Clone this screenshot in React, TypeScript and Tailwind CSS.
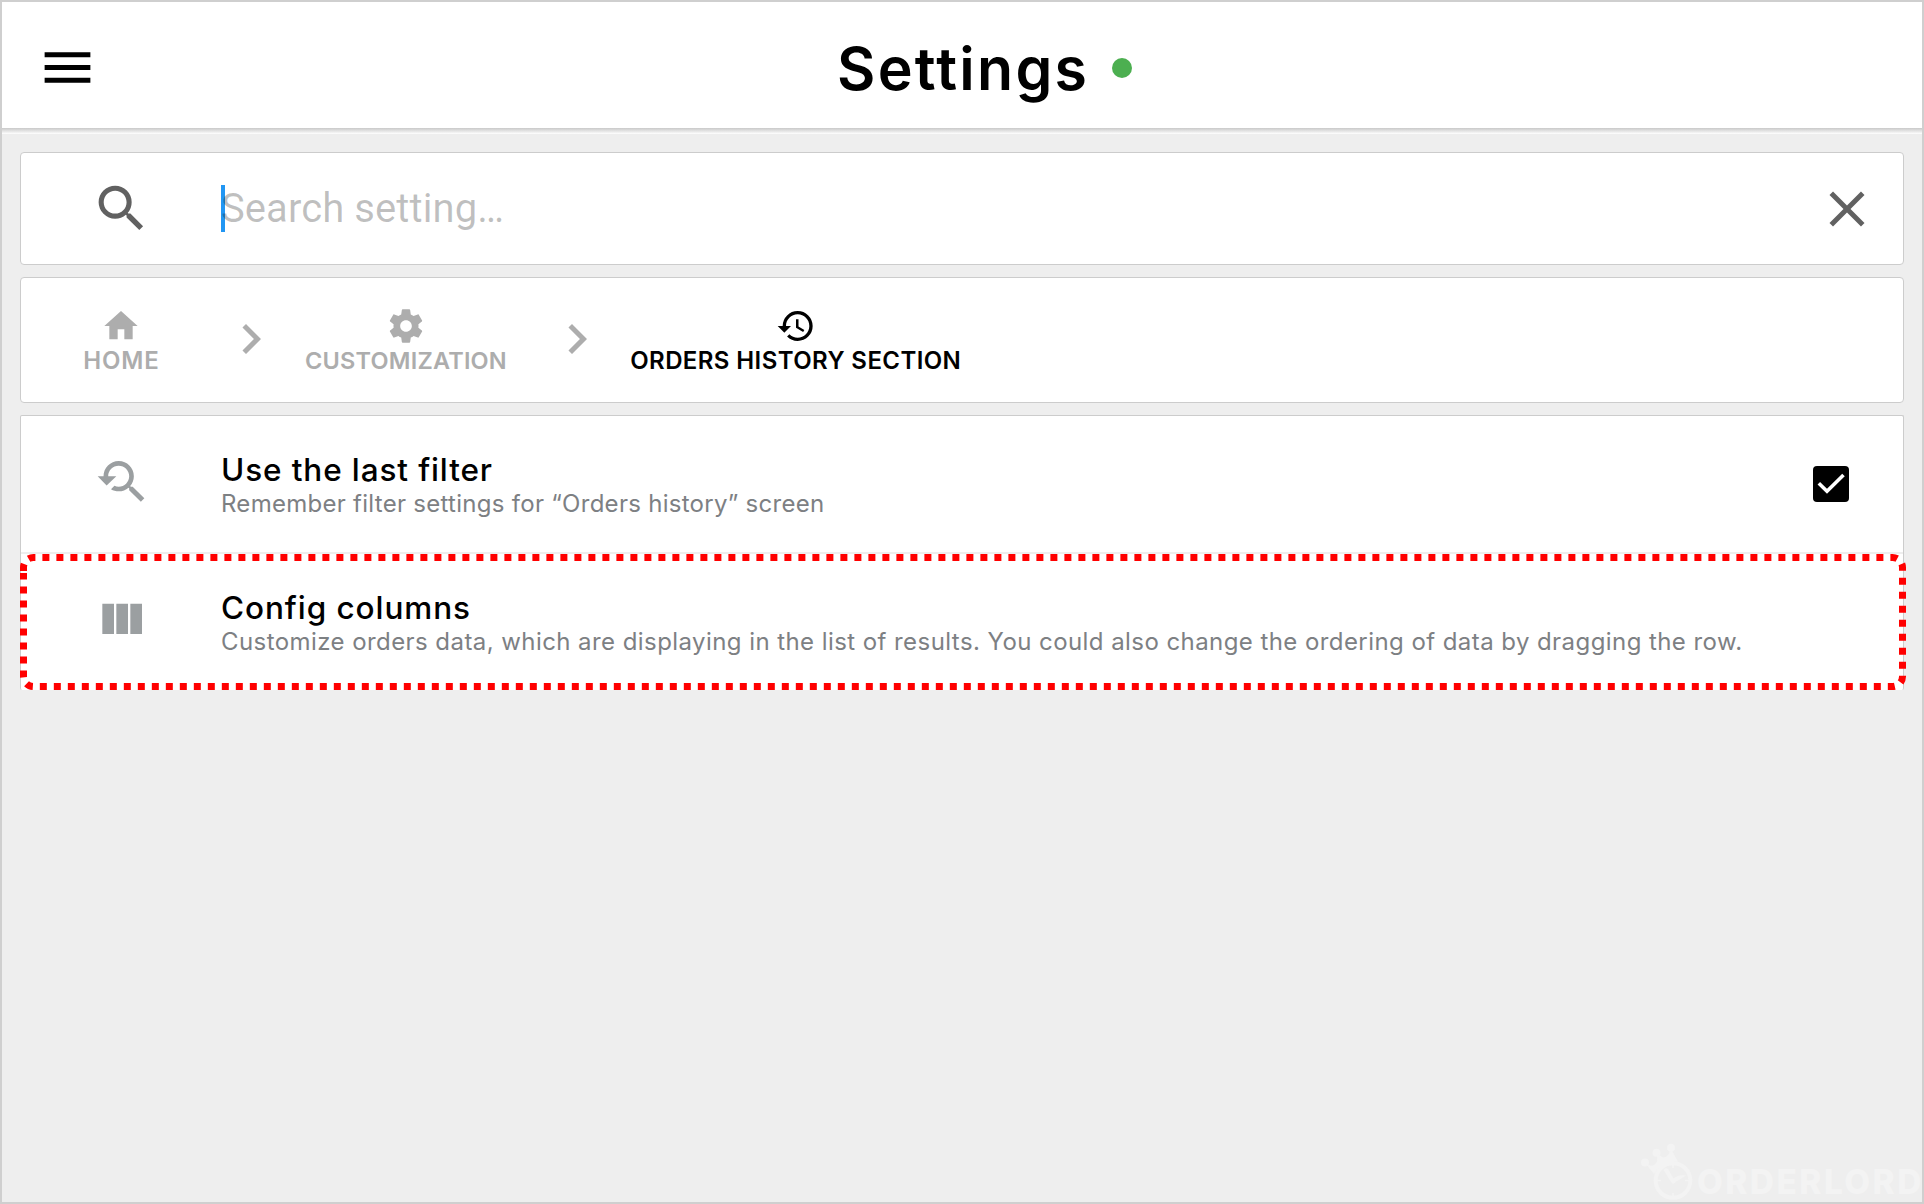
import React from "react";

const PATHS = {
  menu: "M3 18h18v-2H3v2zm0-5h18v-2H3v2zm0-7v2h18V6H3z",
  search:
    "M15.5 14h-.79l-.28-.27A6.471 6.471 0 0 0 16 9.5 6.5 6.5 0 1 0 9.5 16c1.61 0 3.09-.59 4.23-1.57l.27.28v.79l5 4.99L20.49 19l-4.99-5zm-6 0C7.01 14 5 11.99 5 9.5S7.01 5 9.5 5 14 7.01 14 9.5 11.99 14 9.5 14z",
  close:
    "M19 6.41L17.59 5 12 10.59 6.41 5 5 6.41 10.59 12 5 17.59 6.41 19 12 13.41 17.59 19 19 17.59 13.41 12z",
  home: "M10 20v-6h4v6h5v-8h3L12 3 2 12h3v8z",
  chevron: "M10 6L8.59 7.41 13.17 12l-4.58 4.59L10 18l6-6z",
  settings:
    "M19.43 12.98c.04-.32.07-.64.07-.98s-.03-.66-.07-.98l2.11-1.65c.19-.15.24-.42.12-.64l-2-3.46c-.12-.22-.39-.3-.61-.22l-2.49 1c-.52-.4-1.08-.73-1.69-.98l-.38-2.65C14.46 2.18 14.25 2 14 2h-4c-.25 0-.46.18-.49.42l-.38 2.65c-.61.25-1.17.59-1.69.98l-2.49-1c-.23-.09-.49 0-.61.22l-2 3.46c-.13.22-.07.49.12.64l2.11 1.65c-.04.32-.07.65-.07.98s.03.66.07.98l-2.11 1.65c-.19.15-.24.42-.12.64l2 3.46c.12.22.39.3.61.22l2.49-1c.52.4 1.08.73 1.69.98l.38 2.65c.03.24.24.42.49.42h4c.25 0 .46-.18.49-.42l.38-2.65c.61-.25 1.17-.59 1.69-.98l2.49 1c.23.09.49 0 .61-.22l2-3.46c.12-.22.07-.49-.12-.64l-2.11-1.65zM12 15.5c-1.93 0-3.5-1.57-3.5-3.5s1.57-3.5 3.5-3.5 3.5 1.57 3.5 3.5-1.57 3.5-3.5 3.5z",
  history:
    "M13 3a9 9 0 0 0-9 9H1l3.89 3.89.07.14L9 12H6c0-3.87 3.13-7 7-7s7 3.13 7 7-3.13 7-7 7c-1.93 0-3.68-.79-4.94-2.06l-1.42 1.42A8.954 8.954 0 0 0 13 21a9 9 0 0 0 0-18zm-1 5v5l4.28 2.54.72-1.21-3.5-2.08V8H12z",
  searchAgain:
    "M17.01 14h-.8l-.27-.27c.98-1.14 1.57-2.61 1.57-4.23 0-3.59-2.91-6.5-6.5-6.5s-6.5 3-6.5 6.5H2l3.84 4 4.16-4H6.51C6.51 7 8.53 5 11.01 5s4.5 2.01 4.5 4.5c0 2.48-2.02 4.5-4.5 4.5-.65 0-1.26-.14-1.82-.38L7.71 15.1c.97.57 2.09.9 3.3.9 1.61 0 3.08-.59 4.22-1.57l.27.27v.79l5.01 4.99L22 19l-4.99-5z",
  columns: "M10 18h5V5h-5v13zm-6 0h5V5H4v13zM16 5v13h5V5h-5z",
};

function Icon({ name, className }: { name: keyof typeof PATHS; className: string }) {
  return (
    <svg viewBox="0 0 24 24" fill="currentColor" className={`shrink-0 ${className}`}>
      <path d={PATHS[name]} />
    </svg>
  );
}

interface CrumbProps {
  icon: keyof typeof PATHS;
  label: string;
  className: string;
  labelClass: string;
}

function Crumb({ icon, label, className, labelClass }: CrumbProps) {
  return (
    <div className={`flex flex-col items-center pt-[28px] ${className}`}>
      <Icon name={icon} className="size-10" />
      <span className={`mt-px h-7 leading-7 font-semibold whitespace-nowrap ${labelClass}`}>{label}</span>
    </div>
  );
}

function Watermark() {
  return (
    <div className="absolute right-0 bottom-0 flex h-[62px] w-[282px] items-end text-[#f3f3f3]">
      <svg viewBox="1640 1142 56 60" className="h-[60px] w-14 shrink-0" fill="currentColor">
        <circle cx="1645" cy="1162.5" r="4" />
        <circle cx="1656.5" cy="1152.8" r="4" />
        <circle cx="1671" cy="1147.8" r="4" />
        <path d="M1645 1163L1654 1174Q1663 1161 1678 1161.500L1671 1149Q1668 1158 1663 1157.500L1656.500 1153Q1659 1162 1654 1165Q1650 1167 1645 1163Z" />
        <circle cx="1673" cy="1180.500" r="17.300" fill="none" stroke="currentColor" strokeWidth="4" />
        <path d="M1673 1164V1168M1673 1193V1197M1657 1180.500H1661M1685 1180.500H1689" stroke="currentColor" strokeWidth="1.500" />
        <path d="M1663.500 1170Q1665 1167 1668 1169L1673.500 1178.500Q1679 1174 1686 1175.500Q1681 1179 1676 1181.500Q1673 1186 1670.500 1181Z" />
      </svg>
      <span className="ml-px h-10 text-[33.5px] leading-10 font-extrabold tracking-[2.4px]">ORDERLORD</span>
    </div>
  );
}

export default function App() {
  return (
    <div className="relative flex h-[1204px] w-[1924px] flex-col overflow-hidden border-2 border-[#cfcfcf] bg-[#eeeeee] font-['Inter',sans-serif]">
      <header className="grid h-[126px] shrink-0 grid-cols-[1fr_auto_1fr] items-center bg-white pt-[6px]">
        <Icon name="menu" className="-mt-px ml-[35px] size-[61px] text-black" />
        <h1 className="mt-[2px] mr-[-2.3px] text-[59px] leading-[60px] font-semibold tracking-[2.3px] text-black">Settings</h1>
        <span className="ml-[25px] size-5 rounded-full bg-[#4caf50]" />
      </header>
      <div className="h-[6px] shrink-0 bg-linear-to-b from-[#c9c9c9] to-white" />
      <main className="flex flex-col gap-3 px-[18px] pt-[18px]">
        <section className="flex h-[113px] items-center rounded-[4px] border border-[#cccccc] bg-white pr-[26px] pl-[69.5px]">
          <Icon name="search" className="size-[61px] text-[#616161]" />
          <div className="relative ml-[69.5px] flex h-[47px] flex-1 items-center">
            <span className="absolute top-0 left-0 h-[47px] w-1 bg-[#2196f3]" />
            <span className="relative font-['Roboto',sans-serif] text-[40px] leading-[47px] tracking-[0.08px] text-black/25">
              Search setting…
            </span>
          </div>
          <Icon name="close" className="size-[60px] text-[#616161]" />
        </section>
        <nav className="flex h-[126px] rounded-[4px] border border-[#cccccc] bg-white pl-[63px] text-[#adadad]">
          <Crumb icon="home" label="HOME" className="w-[74px]" labelClass="mr-[-0.9px] text-[24px] tracking-[0.9px]" />
          <Icon name="chevron" className="mt-[31px] ml-[63px] size-[60px]" />
          <Crumb icon="settings" label="CUSTOMIZATION" className="ml-[25px] w-[200px]" labelClass="text-[23.5px] tracking-[0.2px]" />
          <Icon name="chevron" className="mt-[31px] ml-[41px] size-[60px]" />
          <Crumb
            icon="history"
            label="ORDERS HISTORY SECTION"
            className="ml-[23.5px] w-[330px] text-black"
            labelClass="mr-[-0.4px] text-[24px] tracking-[0.4px]"
          />
        </nav>
        <section className="rounded-[2px] border border-b-0 border-[#cccccc] bg-white">
          <div className="flex h-[138px] items-start border-b-2 border-[#eeeeee] pl-[72px]">
            <Icon name="searchAgain" className="mt-[38px] size-[56px] text-[#9b9fa1]" />
            <div className="mt-[36px] ml-[72px] flex-1">
              <h2 className="text-[31.5px] leading-9 font-medium tracking-[0.88px] text-black">Use the last filter</h2>
              <p className="text-[24px] leading-8 tracking-[0.28px] text-[#7d8083]">
                Remember filter settings for “Orders history” screen
              </p>
            </div>
            <svg viewBox="0 0 36 36" className="mt-[50px] mr-[54px] size-9">
              <rect width="36" height="36" rx="4" />
              <path d="M5.800 17.200L14 25.200L30.500 9" fill="none" stroke="white" strokeWidth="3.600" />
            </svg>
          </div>
          <div className="relative flex h-[136px] items-start pl-[72px]">
            <svg viewBox="20 554 1886 136" className="absolute top-0 -left-px h-[136px] w-[1886px]">
              <path
                d="M23.5 571V567.5A10 10 0 0 1 33.5 557.5H1892.5A10 10 0 0 1 1902.5 567.5V676.5A10 10 0 0 1 1892.5 686.5H33.5A10 10 0 0 1 23.5 676.5V573"
                fill="none"
                stroke="#ff0000"
                strokeWidth="7"
                strokeDasharray="7 7"
              />
            </svg>
            <Icon name="columns" className="mt-[38px] size-[56px] text-[#9b9fa1]" />
            <div className="mt-[36px] ml-[72px]">
              <h2 className="text-[31.5px] leading-9 font-medium tracking-[0.93px] text-black">Config columns</h2>
              <p className="text-[24px] leading-8 tracking-[0.43px] whitespace-nowrap text-[#7d8083]">
                Customize orders data, which are displaying in the list of results. You could also change the ordering of data by dragging the row.
              </p>
            </div>
          </div>
        </section>
      </main>
      <Watermark />
    </div>
  );
}
